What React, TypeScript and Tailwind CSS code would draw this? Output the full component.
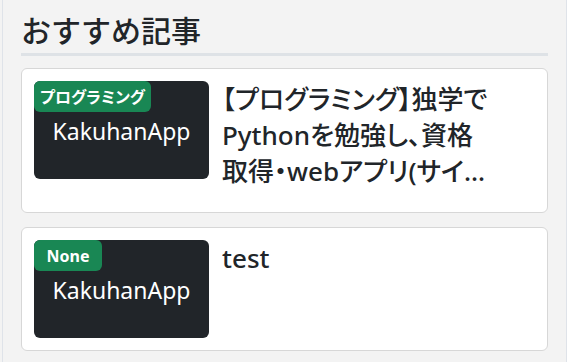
const articles = [
  {
    category: "プログラミング",
    badgeWidth: "w-[117px]",
    title:
      "【プログラミング】独学でPythonを勉強し、資格取得・webアプリ(サイト)を作成するまでの話",
  },
  { category: "None", badgeWidth: "w-[68px]", title: "test" },
];

function Thumb({ category, badgeWidth }: { category: string; badgeWidth: string }) {
  return (
    <div className="relative w-[175px] h-[98px] shrink-0 rounded-[6px] bg-[#212529] flex items-center justify-center">
      <span
        className={`absolute top-0 left-0 ${badgeWidth} h-[31px] flex items-center justify-center rounded-[6px] bg-[#198754] text-white text-[16px] font-bold leading-none [font-feature-settings:'palt']`}
      >
        {category}
      </span>
      <span className="text-white text-[23px] leading-none mt-[3px]">KakuhanApp</span>
    </div>
  );
}

export default function App() {
  return (
    <div
      className="w-[567px] h-[362px] overflow-hidden bg-[#f3f3f3] pl-[2px] text-[#212529]"
      style={{ fontFamily: '"Noto Sans", "Noto Sans CJK JP", sans-serif' }}
    >
      <div className="w-[565px] h-full border-x border-[#dfe3e9] px-[18px]">
        <h2 className="pt-[12px] text-[30px] leading-[38px] font-medium border-b-[3px] border-[#dee2e6] pb-[3px]">
          おすすめ記事
        </h2>
        <div className="mt-[12px] flex flex-col gap-[14px]">
          {articles.map((a) => (
            <div
              key={a.title}
              className="flex items-start bg-white border border-[#d7d7d7] rounded-[6px] p-[12px]"
            >
              <Thumb category={a.category} badgeWidth={a.badgeWidth} />
              <h4 className="ml-[13px] mb-[11px] w-[270px] text-[26px] leading-[36px] font-medium line-clamp-3 [font-feature-settings:'palt']">
                {a.title}
              </h4>
            </div>
          ))}
        </div>
      </div>
    </div>
  );
}
